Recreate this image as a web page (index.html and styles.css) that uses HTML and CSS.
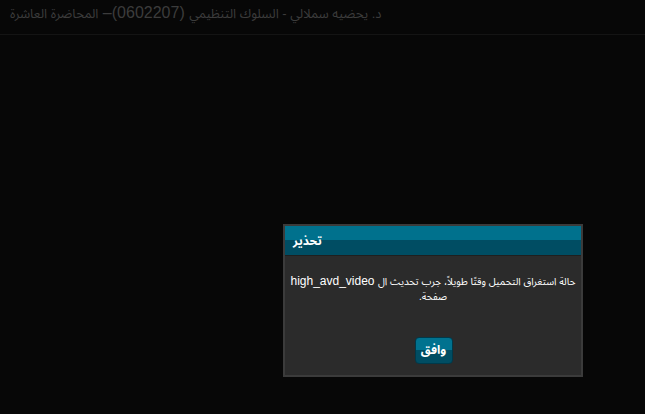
FILE: index.html
```html
<html>
<head>
    <link rel="stylesheet" href="styles.css">
</head>
<body>
    <div class="topbar">
        <span class="title" dir="rtl"><span class="ar">د. يحضيه سملالي - السلوك التنظيمي</span> (0602207)– <span class="ar">المحاضرة العاشرة</span></span>
    </div>

    <section class="stage"></section>

    <div class="dialog">
        <div class="dialog-head" dir="rtl">تحذير</div>
        <div class="dialog-body">
            <p class="message" dir="rtl"><span class="ar">حالة استغراق التحميل وقتًا طويلاً، جرب تحديث ال</span> high_avd_video<br><span class="ar">صفحة.</span></p>
            <div class="actions">
                <button class="btn">وافق</button>
            </div>
        </div>
    </div>
</body>
</html>
```

FILE: styles.css
```css
html, body {margin:0; padding:0; background:#070707; height:100%; overflow:hidden;}
body {font-family: "Liberation Sans", "Noto Sans Arabic", "Noto Naskh Arabic", "DejaVu Sans", sans-serif;}

.topbar {
    height: 34px;
    border-bottom: 1px solid #141414;
    padding: 0 10px;
    display: flex;
    align-items: center;
}
.topbar .title {color:#3c3c3c; font-size:16px; margin-top:-6px; white-space:nowrap;}
.topbar .ar {font-size:13px;}

.dialog {
    position: absolute;
    left: 283px;
    top: 224px;
    width: 296px;
    height: 149px;
    border: 2px solid #3b3b3b;
    background: #2b2b2b;
    display: flex;
    flex-direction: column;
}
.dialog-head {
    height: 29px;
    background: linear-gradient(#00718d 0, #00718d 50%, #004d63 50%, #004d63 100%);
    border-bottom: 1px solid #1f1f1f;
    color: #fff;
    font-weight: bold;
    font-size: 12px;
    line-height: 31px;
    padding: 0 8px;
    text-align: left;
}
.dialog-body {flex:1; display:flex; flex-direction:column; padding: 0 4px;}
.message {
    color: #fff;
    font-size: 12px;
    line-height: 15px;
    text-align: center;
    white-space: nowrap;
    margin: 18px 0 0 0;
}
.message .ar {font-size:10px;}
.actions {margin-top:auto; margin-bottom:11px; display:flex; justify-content:center;}
.btn {
    width: 38px;
    height: 27px;
    border: 1px solid #00394a;
    border-radius: 4px;
    background: linear-gradient(#00728f 0, #00728f 50%, #004d63 50%, #004d63 100%);
    color: #fff;
    font-family: inherit;
    font-weight: bold;
    font-size: 12px;
    padding: 0;
    margin-left: 1px;
}
```
